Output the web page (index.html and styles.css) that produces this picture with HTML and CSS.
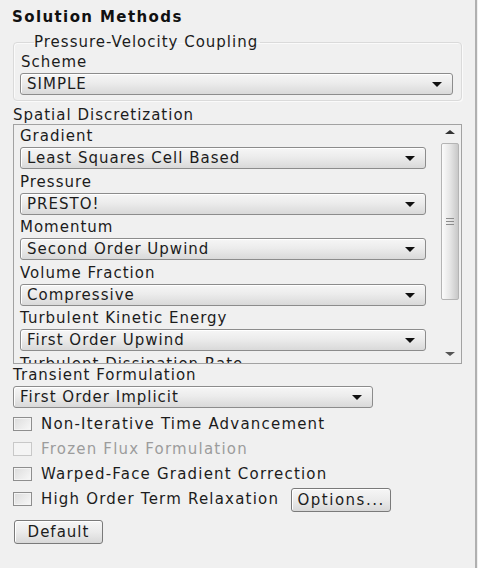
FILE: index.html
```html
<!DOCTYPE html>
<html lang="en">
<head>
  <meta charset="UTF-8">
  <title>Solution Methods</title>
  <link rel="stylesheet" href="styles.css">
</head>
<body>
  <div class="panel">
    <h1 class="title">Solution Methods</h1>

    <fieldset class="group">
      <legend>Pressure-Velocity Coupling</legend>
      <div class="label">Scheme</div>
      <div class="select">SIMPLE<span class="arrow"></span></div>
    </fieldset>

    <div class="label outer">Spatial Discretization</div>
    <div class="scrollbox">
      <div class="scroll-content">
        <div class="label">Gradient</div>
        <div class="select">Least Squares Cell Based<span class="arrow"></span></div>
        <div class="label">Pressure</div>
        <div class="select">PRESTO!<span class="arrow"></span></div>
        <div class="label">Momentum</div>
        <div class="select">Second Order Upwind<span class="arrow"></span></div>
        <div class="label">Volume Fraction</div>
        <div class="select">Compressive<span class="arrow"></span></div>
        <div class="label">Turbulent Kinetic Energy</div>
        <div class="select">First Order Upwind<span class="arrow"></span></div>
        <div class="label">Turbulent Dissipation Rate</div>
      </div>
      <div class="scrollbar">
        <span class="sb-up"></span>
        <div class="sb-thumb"><span class="grip"></span></div>
        <div class="sb-track"></div>
        <span class="sb-down"></span>
      </div>
    </div>

    <div class="label trans">Transient Formulation</div>
    <div class="select short">First Order Implicit<span class="arrow"></span></div>

    <div class="checks">
      <div class="check"><span class="box"></span>Non-Iterative Time Advancement</div>
      <div class="check disabled"><span class="box"></span>Frozen Flux Formulation</div>
      <div class="check"><span class="box"></span>Warped-Face Gradient Correction</div>
      <div class="check"><span class="box"></span>High Order Term Relaxation<button class="btn options">Options...</button></div>
    </div>

    <button class="btn default">Default</button>
  </div>
</body>
</html>
```

FILE: styles.css
```css
body { margin: 0; background: #f0f0f0; font-family: "DejaVu Sans", Verdana, sans-serif; font-size: 15px; letter-spacing: 1px; color: #1c1c1c; }
.panel { width: 477px; height: 568px; box-sizing: border-box; border-right: 2px solid #b0b0b0; padding: 8px 0 0 13px; }
.title { font-size: 15px; font-weight: bold; letter-spacing: 1.4px; margin: 0 0 0 -1px; line-height: 19px; color: #111; }

.group { margin: 7px 0 0 0; width: 448px; box-sizing: border-box; border: 1px solid #dadada; border-radius: 4px; padding: 3px 8px 5px 7px; box-shadow: inset 1px 1px 0 #fafafa, 1px 1px 0 #fafafa; }
.group legend { padding: 0 2px 0 0; margin-left: 13px; line-height: 16px; }

.label { line-height: 18px; height: 18px; white-space: nowrap; }
.outer { margin-top: 6px; height: 17px; line-height: 17px; }
.trans { margin-top: 2px; }

.select { position: relative; height: 22px; box-sizing: border-box; border: 1px solid #8c8c8c; border-radius: 3px; background: linear-gradient(#f6f6f6, #ececec 45%, #d9d9d9); padding-left: 6px; line-height: 20px; box-shadow: inset 1px 1px 0 #fff; white-space: nowrap; }
.group .select { width: 433px; margin-top: 2px; margin-left: -1px; }
.arrow { position: absolute; right: 10px; top: 8px; width: 0; height: 0; border-left: 5px solid transparent; border-right: 5px solid transparent; border-top: 5px solid #111; }

.scrollbox { display: flex; width: 449px; height: 240px; box-sizing: border-box; border: 1px solid #a2a2a2; overflow: hidden; }
.scroll-content { width: 406px; padding: 2px 0 0 6px; }
.scroll-content .select { margin-top: 2px; margin-bottom: 3.5px; }

.scrollbar { width: 22px; margin-left: 13px; display: flex; flex-direction: column; align-items: center; padding-top: 4px; }
.sb-up { width: 0; height: 0; border-left: 5px solid transparent; border-right: 5px solid transparent; border-bottom: 4px solid #333; margin-top: 1px; }
.sb-thumb { width: 18px; height: 157px; margin-top: 9px; box-sizing: border-box; border: 1px solid #b4b4b4; border-radius: 2px; background: linear-gradient(90deg, #fbfbfb, #e6e6e6 50%, #c8c8c8); display: flex; align-items: center; justify-content: center; }
.grip { width: 8px; height: 7px; background: repeating-linear-gradient(#8c8c8c 0 1px, transparent 1px 3px); }
.sb-track { flex: 1; }
.sb-down { width: 0; height: 0; border-left: 5px solid transparent; border-right: 5px solid transparent; border-top: 4px solid #555; margin-bottom: 7px; }

.short { width: 360px; margin-top: 2px; }

.checks { margin-top: 3px; }
.check { display: flex; align-items: center; height: 25px; white-space: nowrap; letter-spacing: 1.2px; }
.check.disabled { color: #9c9c9c; }
.box { width: 19px; height: 14px; box-sizing: border-box; border: 1px solid #8e8e8e; background: linear-gradient(135deg, #dcdcdc, #f8f8f8); box-shadow: inset 0 0 0 1px #f4f4f4; margin-right: 9px; }
.check.disabled .box { border-color: #c8c8c8; background: #f4f4f4; }

.btn { font-family: inherit; font-size: 15px; letter-spacing: 1px; color: #1c1c1c; height: 24px; padding: 0; border: 1px solid #7a7a7a; border-radius: 3px; background: linear-gradient(#f6f6f6, #ebebeb 50%, #d8d8d8); box-shadow: inset 1px 1px 0 #fff; cursor: pointer; }
.options { margin-left: 12px; width: 100px; margin-top: 2px; letter-spacing: 1.5px; }
.default { margin-top: 9px; margin-left: 1px; width: 89px; }
```
